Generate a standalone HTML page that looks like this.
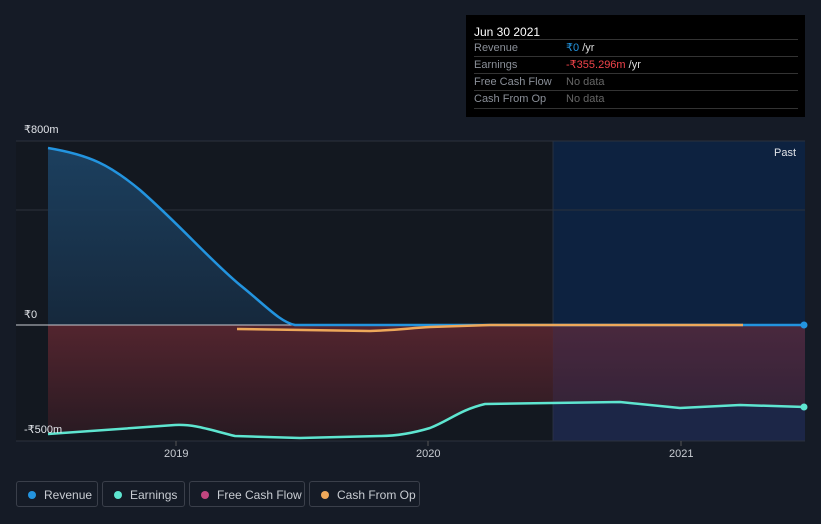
<!DOCTYPE html>
<html><head><style>
body{margin:0;width:821px;height:524px;background:#151b26;font-family:"Liberation Sans",sans-serif;overflow:hidden;position:relative}
.tip{position:absolute;left:466px;top:15px;width:339px;height:102px;background:#000;color:#fff;font-size:11px}
.tip .h{position:absolute;left:8px;top:10px;font-size:12px}
.row{position:absolute;left:8px;width:324px;height:17px;border-top:1px solid #333;line-height:17px;color:#8a8f98}
.row span{position:absolute;left:92px}
.leg{position:absolute;top:481px;height:26px;border:1px solid #3a3f4a;border-radius:3px;color:#c8ccd2;font-size:12px;line-height:26px;box-sizing:border-box}
.leg i{position:absolute;left:11px;top:9px;width:8px;height:8px;border-radius:50%}
.leg b{font-weight:normal;position:absolute;left:27px}
.ax{position:absolute;color:#e0e3e8;font-size:11px}
</style></head><body>
<svg width="821" height="524" style="position:absolute;left:0;top:0">
<defs>
<linearGradient id="rg" x1="0" y1="0" x2="0" y2="1"><stop offset="0" stop-color="#1d4466"/><stop offset="1" stop-color="#162a3f"/></linearGradient>
<linearGradient id="eg" x1="0" y1="0" x2="0" y2="1"><stop offset="0" stop-color="#5a2630"/><stop offset="1" stop-color="#2a1a22"/></linearGradient>
</defs>
<rect x="16" y="141" width="537" height="300" fill="#131820"/>
<rect x="553" y="141" width="252" height="300" fill="#0d2240"/>
<line x1="16" y1="141" x2="805" y2="141" stroke="#2c323d"/>
<line x1="16" y1="210" x2="805" y2="210" stroke="#2c323d"/>
<line x1="553" y1="141" x2="553" y2="441" stroke="#263040"/>
<path d="M48,148 C90,155 110,165 140,190 C180,225 210,260 240,285 C265,305 280,322 295,325 L805,325 L48,325Z" fill="url(#rg)" opacity="0.9"/>
<path d="M48,325 L805,325 L805,407 L740,405 L680,408 L620,402 L485,404 C460,410 450,420 430,428 C410,434 395,436 380,436 L300,438 L235,436 C210,430 195,424 175,425 L48,434Z" fill="url(#eg)" opacity="0.9"/>
<rect x="553" y="325" width="252" height="116" fill="#3a2f55" opacity="0.35"/>
<line x1="16" y1="325" x2="805" y2="325" stroke="#c8ccd2" stroke-width="1"/>
<line x1="16" y1="441" x2="805" y2="441" stroke="#2c323d"/>
<path d="M48,148 C90,155 110,165 140,190 C180,225 210,260 240,285 C265,305 280,322 295,325 L805,325" fill="none" stroke="#2394df" stroke-width="2.5"/>
<path d="M48,434 L175,425 C195,424 210,430 235,436 L300,438 L380,436 C395,436 410,434 430,428 C450,420 460,410 485,404 L620,402 L680,408 L740,405 L805,407" fill="none" stroke="#5ee5d0" stroke-width="2.5"/>
<path d="M237,329 L370,331 C400,330 410,328 430,327 L490,325 L743,325" fill="none" stroke="#eea85a" stroke-width="2.5"/>
<circle cx="804" cy="325" r="3.5" fill="#2394df"/>
<circle cx="804" cy="407" r="3.5" fill="#5ee5d0"/>
<line x1="176" y1="441" x2="176" y2="446" stroke="#555"/>
<line x1="428" y1="441" x2="428" y2="446" stroke="#555"/>
<line x1="681" y1="441" x2="681" y2="446" stroke="#555"/>
</svg>
<div class="ax" style="left:24px;top:123px">₹800m</div>
<div class="ax" style="left:24px;top:308px">₹0</div>
<div class="ax" style="left:24px;top:423px">-₹500m</div>
<div class="ax" style="left:774px;top:147px">Past</div>
<div class="ax" style="left:164px;top:448px;color:#c8ccd2">2019</div>
<div class="ax" style="left:416px;top:448px;color:#c8ccd2">2020</div>
<div class="ax" style="left:669px;top:448px;color:#c8ccd2">2021</div>
<div class="tip">
<div class="h">Jun 30 2021</div>
<div class="row" style="top:24px">Revenue<span><font color="#2394df">₹0</font> <font color="#ddd">/yr</font></span></div>
<div class="row" style="top:41px">Earnings<span><font color="#f0434a">-₹355.296m</font> <font color="#ddd">/yr</font></span></div>
<div class="row" style="top:58px">Free Cash Flow<span style="color:#666">No data</span></div>
<div class="row" style="top:75px;border-bottom:1px solid #333">Cash From Op<span style="color:#666">No data</span></div>
</div>
<div class="leg" style="left:16px;width:82px"><i style="background:#2394df"></i><b>Revenue</b></div>
<div class="leg" style="left:102px;width:83px"><i style="background:#5ee5d0"></i><b>Earnings</b></div>
<div class="leg" style="left:189px;width:116px"><i style="background:#c2467f"></i><b>Free Cash Flow</b></div>
<div class="leg" style="left:309px;width:111px"><i style="background:#eea85a"></i><b>Cash From Op</b></div>
</body></html>
